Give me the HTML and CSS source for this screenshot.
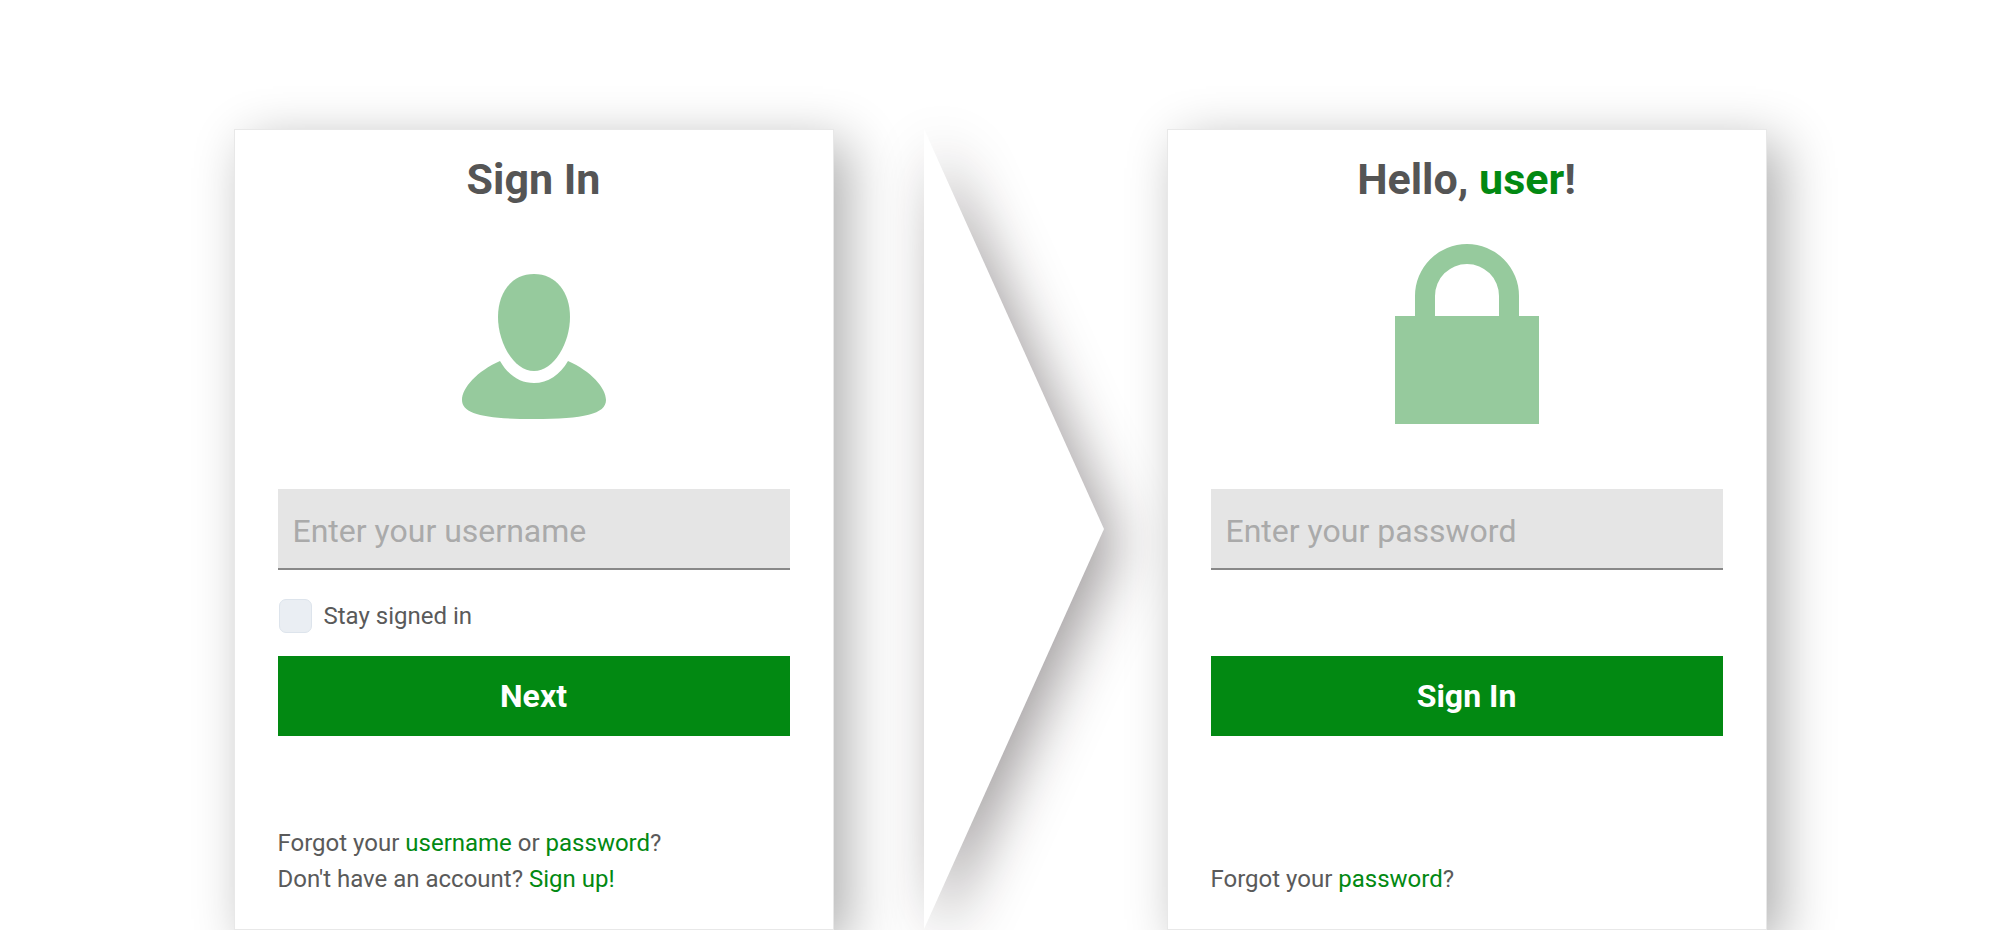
FILE: index.html
```
<!DOCTYPE html>
<html lang="en">
<head>
    <meta charset="UTF-8">
    <meta name="viewport" content="width=device-width, initial-scale=1.0">
    <title>Sign In</title>
    <link rel="stylesheet" href="styles.css">
</head>
<body>
    <main class="steps">
        <form class="card">
            <h1>Sign In</h1>
            <svg class="icon" viewBox="0 0 144 180" aria-hidden="true">
                <path d="M72 30C94 30 108 48 108 73C108 99 92 127 72 127C52 127 36 99 36 73C36 48 50 30 72 30Z"/>
                <path d="M38 117C46 131 58 139 72 139C86 139 98 131 106 117C129 127 144 144 144 156C144 170 122 175 72 175C22 175 0 170 0 156C0 144 15 127 38 117Z"/>
            </svg>
            <input class="field" type="text" id="username" placeholder="Enter your username" aria-label="Username">
            <div class="remember">
                <input type="checkbox" id="stay">
                <label for="stay">Stay signed in</label>
            </div>
            <button class="btn" type="button">Next</button>
            <div class="links">
                <p>Forgot your <a href="#">username</a> or <a href="#">password</a>?</p>
                <p>Don't have an account? <a href="#">Sign up!</a></p>
            </div>
        </form>

        <svg class="arrow" viewBox="0 0 180 800" preserveAspectRatio="none" aria-hidden="true">
            <path d="M0 0L180 400L0 800Z"/>
        </svg>

        <form class="card">
            <h1>Hello, <span class="name">user</span>!</h1>
            <svg class="icon" viewBox="0 0 144 180" aria-hidden="true">
                <path d="M0 72H20V52A52 52 0 0 1 124 52V72H144V180H0ZM40 72H104V52A32 32 0 0 0 40 52Z"/>
            </svg>
            <input class="field" type="password" id="password" placeholder="Enter your password" aria-label="Password">
            <button class="btn btn-signin" type="button">Sign In</button>
            <div class="links">
                <p>Forgot your <a href="#">password</a>?</p>
            </div>
        </form>
    </main>
</body>
</html>
```

FILE: styles.css
```
* {
    box-sizing: border-box;
}
body {
    margin: 0;
    background: #fff;
    color: #5a5a5a;
    font-family: Roboto, sans-serif;
    font-size: 24px;
    line-height: 36px;
}
.steps {
    display: flex;
    justify-content: center;
    padding-top: 129px;
}
.card {
    display: flex;
    flex-direction: column;
    width: 30%;
    min-height: 801px;
    padding: 23px 43px 32px;
    background: #fff;
    border: 1px solid #e8e8e8;
    box-shadow: 14px 14px 50px rgba(0, 0, 0, 0.32);
}
/* keep the arrow's shadow behind the second card */
.arrow + .card {
    z-index: 1;
}
h1 {
    margin: 0 0 39px;
    color: #555;
    font-size: 43px;
    line-height: 52px;
    text-align: center;
}
.name,
a {
    color: #028912;
    text-decoration: none;
}
.icon {
    align-self: center;
    width: 144px;
    height: 180px;
    margin-bottom: 65px;
    fill: #96ca9d;
}
.field {
    width: 100%;
    height: 81px;
    padding: 4px 15px 0;
    background: #e5e5e5;
    border: none;
    border-bottom: 2px solid #888;
    border-radius: 0;
    color: #555;
    font: 32px Roboto, sans-serif;
}
.field::placeholder {
    color: #aaa;
}
.remember {
    display: flex;
    align-items: center;
    gap: 12px;
    height: 34px;
    margin: 29px 0 23px;
    padding-left: 1px;
}
.remember input {
    appearance: none;
    width: 33px;
    height: 34px;
    margin: 0;
    background: #eaeef3;
    border: 1px solid #dde4ec;
    border-radius: 7px;
}
.remember input:checked {
    background: #028912;
}
.btn {
    width: 100%;
    height: 80px;
    padding: 0;
    background: #028912;
    border: none;
    color: #fff;
    font: bold 32px Roboto, sans-serif;
    cursor: pointer;
}
.btn-signin {
    margin-top: 86px;
}
.links {
    margin-top: auto;
}
.links p {
    margin: 0;
}
.arrow {
    width: 180px;
    height: 800px;
    margin: 0 63px 0 90px;
    overflow: visible;
    fill: #fff;
    filter: drop-shadow(14px 14px 28px rgba(20, 10, 12, 0.4));
}
```
